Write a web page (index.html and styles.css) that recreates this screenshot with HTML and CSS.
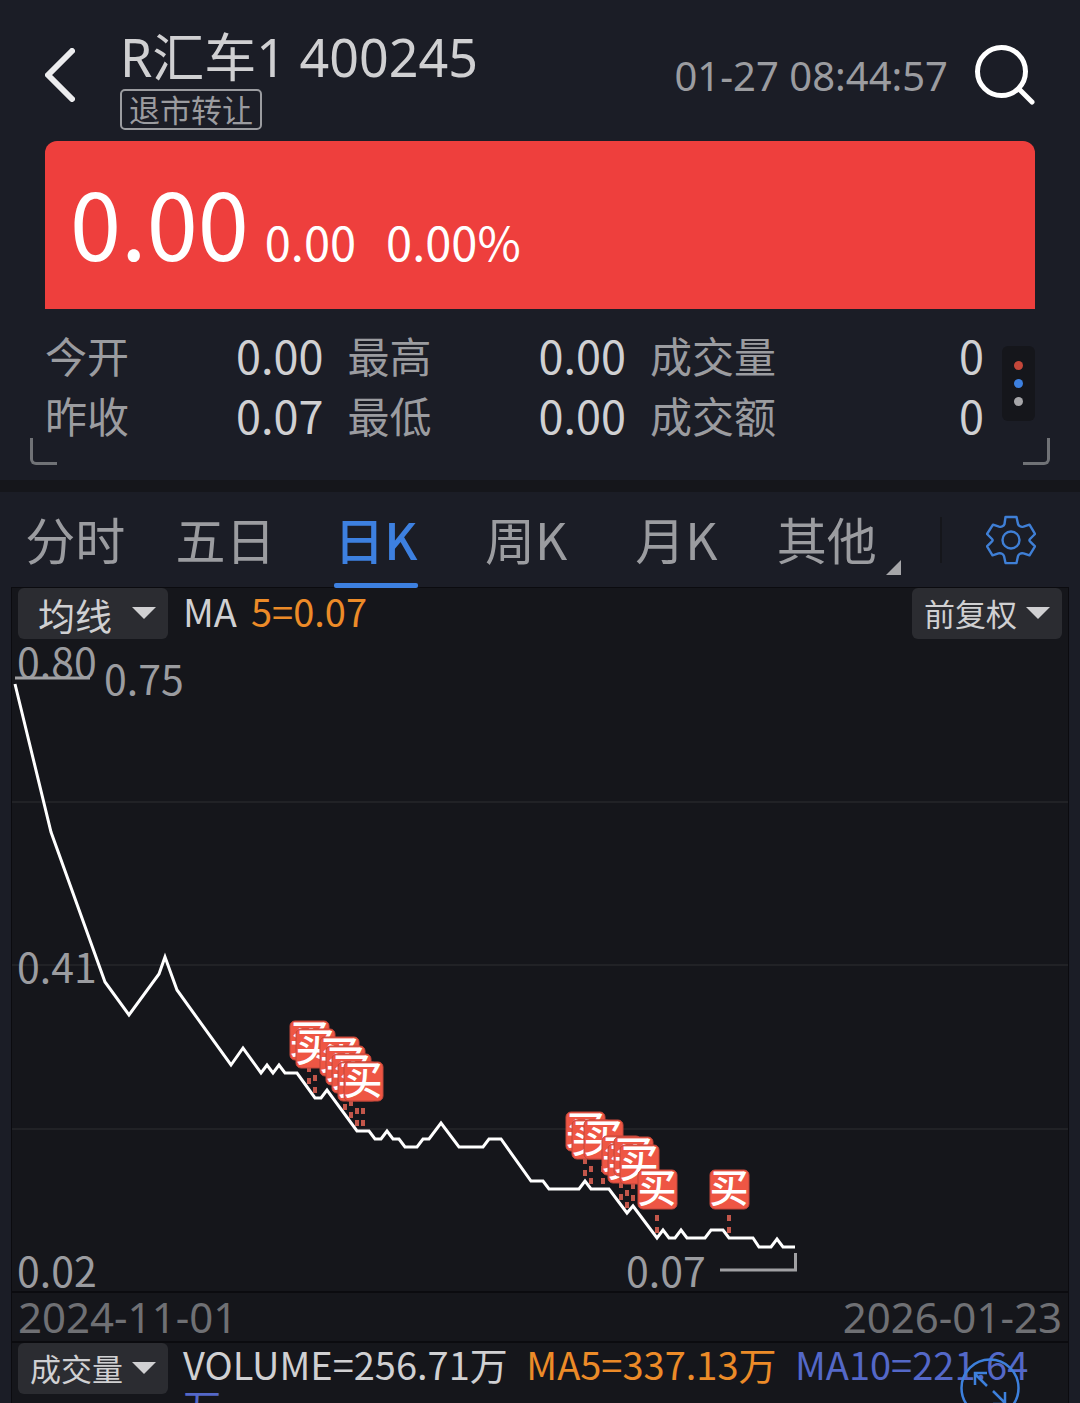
FILE: index.html
```html
<!DOCTYPE html>
<html lang="zh-CN">
<head>
    <meta charset="UTF-8">
    <meta name="viewport" content="width=device-width, initial-scale=1.0">
    <title>R汇车1 400245</title>
    <link rel="stylesheet" href="styles.css">
</head>
<body>
    <header class="header">
        <button class="icon-button" aria-label="返回">
            <svg width="30" height="54" viewBox="0 0 30 54" fill="none" stroke="#ececee" stroke-width="6" stroke-linecap="round" stroke-linejoin="round">
                <path d="M27 3 3 27l24 24"/>
            </svg>
        </button>
        <div class="stock">
            <h1>R汇车1 400245</h1>
            <span class="tag">退市转让</span>
        </div>
        <time class="time">01-27 08:44:57</time>
        <button class="icon-button" aria-label="搜索">
            <svg width="60" height="60" viewBox="0 0 60 60" fill="none" stroke="#ffffff" stroke-width="5" stroke-linecap="round">
                <circle cx="26.5" cy="26.5" r="24"/>
                <path d="M44 44l13 13"/>
            </svg>
        </button>
    </header>

    <section class="quote">
        <span class="price">0.00</span>
        <span class="change">0.00</span>
        <span class="percent">0.00%</span>
    </section>

    <section class="stats">
        <dl class="stats-grid">
            <div class="stat"><dt>今开</dt><dd>0.00</dd></div>
            <div class="stat"><dt>最高</dt><dd>0.00</dd></div>
            <div class="stat"><dt>成交量</dt><dd>0</dd></div>
            <div class="stat"><dt>昨收</dt><dd>0.07</dd></div>
            <div class="stat"><dt>最低</dt><dd>0.00</dd></div>
            <div class="stat"><dt>成交额</dt><dd>0</dd></div>
        </dl>
        <button class="more" aria-label="更多">
            <span class="dot red"></span>
            <span class="dot blue"></span>
            <span class="dot grey"></span>
        </button>
    </section>

    <nav class="tabs">
        <button class="tab">分时</button>
        <button class="tab">五日</button>
        <button class="tab active">日K</button>
        <button class="tab">周K</button>
        <button class="tab">月K</button>
        <button class="tab other">其他</button>
        <button class="settings" aria-label="设置">
            <svg width="50" height="50" viewBox="0 0 50 50" fill="none" stroke="#3f7fd6" stroke-width="2.4" stroke-linejoin="round">
                <path d="M19.500 2h11l1.500 7q.5 1.500 2 2.300 1.500.9 3.500.4l6-2 5.500 9.300-5 5q-1.200 1.200 0 2.400l5 5-5.500 9-6-2q-2-.5-3.500.4-1.500.8-2 2.300l-1.500 7h-11l-1.500-7q-.5-1.500-2-2.300-1.500-.9-3.500-.4l-6 2-5.500-9 5-5q1.200-1.200 0-2.400l-5-5L7 9.700l6 2q2 .5 3.500-.4 1.500-.8 2-2.300z"/>
                <circle cx="25" cy="25" r="8.500"/>
            </svg>
        </button>
    </nav>

    <main class="panel">
        <div class="toolbar">
            <label class="picker wide">
                <select aria-label="指标"><option>均线</option><option>BOLL</option></select>
            </label>
            <p class="legend">MA<span class="orange first">5=0.07</span></p>
            <label class="picker right">
                <select aria-label="复权"><option>前复权</option><option>后复权</option></select>
            </label>
        </div>

        <svg class="chart" viewBox="12 639 1056 652">
            <defs>
                <g id="buy">
                    <rect x="-19" y="-69" width="39" height="39" rx="5"/>
                    <text y="-37" text-anchor="middle">买</text>
                </g>
            </defs>

            <path class="grid" d="M12 802h1056M12 965h1056M12 1129h1056"/>

            <text class="axis" x="17" y="678">0.80</text>
            <text class="axis" x="17" y="983">0.41</text>
            <text class="axis" x="17" y="1287">0.02</text>
            <text class="axis" x="104" y="695">0.75</text>
            <text class="axis" x="626" y="1287">0.07</text>
            <path class="pointer" d="M15 678h75M720 1270h75.5v-17"/>

            <polyline class="line" points="15,684 51,832 105,982 129,1015 159,974 165,957 177,990 231,1065 243,1048 261,1073 267,1065 273,1073 279,1065 285,1073 297,1073 315,1098 321,1098 327,1090 357,1131 369,1131 375,1139 381,1139 387,1131 393,1139 399,1139 405,1147 417,1147 423,1139 429,1139 441,1123 459,1147 483,1147 489,1139 501,1139 531,1181 543,1181 549,1189 579,1189 585,1181 591,1189 609,1189 627,1213 633,1206 657,1238 663,1230 669,1238 675,1238 681,1230 687,1238 705,1238 711,1230 723,1230 729,1238 753,1238 759,1247 771,1247 777,1239 783,1247 795,1247"/>

            <!-- dashed stems from the buy marks down to the line -->
            <path class="stems" d="M309 1066v18M315 1075v18M345 1092v18M351 1100v18M357 1108v18M363 1108v18M585 1158v18M591 1166v18M603 1166v18M621 1182v18M627 1190v18M633 1183v18M657 1215v18M729 1215v18"/>

            <g class="marks">
                <use href="#buy" x="309" y="1090"/>
                <use href="#buy" x="315" y="1098"/>
                <use href="#buy" x="339" y="1106"/>
                <use href="#buy" x="345" y="1115"/>
                <use href="#buy" x="351" y="1123"/>
                <use href="#buy" x="357" y="1131"/>
                <use href="#buy" x="363" y="1131"/>
                <use href="#buy" x="585" y="1181"/>
                <use href="#buy" x="591" y="1189"/>
                <use href="#buy" x="603" y="1189"/>
                <use href="#buy" x="621" y="1205"/>
                <use href="#buy" x="627" y="1213"/>
                <use href="#buy" x="633" y="1206"/>
                <use href="#buy" x="639" y="1214"/>
                <use href="#buy" x="657" y="1239"/>
                <use href="#buy" x="729" y="1239"/>
            </g>
        </svg>

        <div class="dates">
            <time>2024-11-01</time>
            <time>2026-01-23</time>
        </div>

        <div class="toolbar volume">
            <label class="picker">
                <select aria-label="副图指标"><option>成交量</option><option>MACD</option></select>
            </label>
            <p class="legend">VOLUME=256.71万 <span class="orange">MA5=337.13万</span> <span class="blue-text">MA10=221.64万</span></p>
            <button class="expand" aria-label="全屏">
                <svg width="60" height="60" viewBox="0 0 60 60" fill="none" stroke="#3d80dc" stroke-width="2.5">
                    <circle cx="30" cy="30" r="28.5"/>
                    <path d="M27 28 15 16M15 27V15h12M33 33l12 12M45 34v12H33"/>
                </svg>
            </button>
        </div>
    </main>
</body>
</html>
```

FILE: styles.css
```css
* {
    box-sizing: border-box;
}
body {
    display: flex;
    flex-direction: column;
    height: 100vh;
    margin: 0;
    overflow: hidden;
    background: #1b1d26;
    color: #d0d0d2;
    font-family: "Noto Sans CJK SC", sans-serif;
}
h1, p, dl, dd {
    margin: 0;
}
button, select {
    padding: 0;
    border: none;
    background: none;
    color: inherit;
    font-family: inherit;
    cursor: pointer;
}
svg {
    display: block;
}
.header, .quote, .stats, .tabs {
    flex-shrink: 0;
}

/* header */
.header {
    display: flex;
    align-items: center;
    padding: 20px 45px 11px;
}
.icon-button {
    flex: none;
}
.stock {
    flex: 1;
    margin-left: 45px;
    padding-top: 7px;
}
h1 {
    height: 62px;
    font-family: "Noto Sans", "Noto Sans CJK SC", sans-serif;
    font-size: 52px;
    font-weight: normal;
    line-height: 60px;
}
.tag {
    display: block;
    width: fit-content;
    padding: 0 7px 1px;
    border: 2px solid #9b9ca0;
    border-radius: 5px;
    color: #9b9ca0;
    font-size: 31px;
    line-height: 36px;
}
.time {
    margin-right: 27px;
    color: #9b9ca0;
    font-family: "Noto Sans", sans-serif;
    font-size: 40px;
}

/* price */
.quote {
    display: flex;
    align-items: baseline;
    margin: 0 45px;
    padding: 18px 25px 26px;
    border-radius: 12px 12px 0 0;
    background: #ee3f3d;
    color: #ffffff;
    font-size: 47px;
    white-space: nowrap;
}
.price {
    font-size: 92px;
    line-height: 124px;
}
.change {
    margin: 0 30px 0 16px;
}

/* open, high, low */
.stats {
    position: relative;
    display: flex;
    align-items: flex-start;
    gap: 18px;
    padding: 16px 45px 35px;
}
.stats::before,
.stats::after {
    content: "";
    position: absolute;
    bottom: 15px;
    width: 24px;
    height: 24px;
    border-bottom: 3px solid #707276;
}
.stats::before {
    left: 30px;
    border-left: 3px solid #707276;
    border-bottom-left-radius: 6px;
}
.stats::after {
    right: 30px;
    border-right: 3px solid #707276;
    border-bottom-right-radius: 6px;
}
.stats-grid {
    flex: 1;
    display: grid;
    grid-template-columns: 5fr 5fr 6fr;
    column-gap: 24px;
}
.stat {
    display: flex;
    align-items: center;
    justify-content: space-between;
    height: 60px;
    line-height: 60px;
    white-space: nowrap;
}
.stat dt {
    color: #9b9ca0;
    font-size: 42px;
}
.stat dd {
    font-size: 45px;
}
.more {
    display: flex;
    flex-direction: column;
    align-items: center;
    justify-content: center;
    gap: 9px;
    width: 33px;
    height: 75px;
    margin-top: 21px;
    border-radius: 6px;
    background: #15161b;
}
.dot {
    width: 9px;
    height: 9px;
    border-radius: 50%;
}
.red {
    background: #c4473a;
}
.blue {
    background: #3d80e0;
}
.grey {
    background: #a6a6a9;
}

/* period tabs */
.tabs {
    display: flex;
    height: 108px;
    border-top: 12px solid #15161b;
}
.tab {
    position: relative;
    flex: 1;
    padding-bottom: 4px;
    color: #9b9ca0;
    font-size: 50px;
    line-height: 92px;
}
.active {
    color: #3d80e0;
    font-weight: 500;
}
.active::after {
    content: "";
    position: absolute;
    bottom: 0;
    left: calc(50% - 42px);
    width: 84px;
    height: 5px;
    border-radius: 2px;
    background: #3d80e0;
}
.other::after {
    content: "";
    position: absolute;
    right: 1px;
    bottom: 13px;
    border-bottom: 15px solid #a6a6a9;
    border-left: 15px solid transparent;
}
.settings {
    display: flex;
    align-items: center;
    justify-content: flex-end;
    width: 140px;
    height: 46px;
    margin: 25px 0 0 38px;
    padding-right: 44px;
    border-left: 2px solid #15161b;
}

/* chart panel */
.panel {
    flex: 1;
    display: flex;
    flex-direction: column;
    margin: 0 12px;
    background: #15161b;
    box-shadow: 0 0 0 1px #0b0b0f;
}
.toolbar {
    position: relative;
    display: flex;
    align-items: flex-start;
    gap: 15px;
    height: 51px;
    padding: 0 6px;
}
.picker {
    position: relative;
    flex: none;
    width: 150px;
    height: 51px;
    border-radius: 6px;
    background: #2b2c31;
}
.picker select {
    width: 100%;
    height: 100%;
    padding: 0 0 3px 12px;
    appearance: none;
    font-size: 31px;
}
.picker.wide select {
    padding: 0 0 5px 20px;
    font-size: 37px;
}
.picker::after {
    content: "";
    position: absolute;
    top: 19px;
    right: 12px;
    border: 12px solid transparent;
    border-top-color: #d0d0d2;
    border-bottom: none;
    pointer-events: none;
}
.right {
    margin-left: auto;
}
.legend {
    font-size: 38px;
    line-height: 46px;
}
.legend span {
    margin-left: 10px;
}
.legend .first {
    margin-left: 14px;
}
.orange {
    color: #ec8b28;
}
.blue-text {
    color: #5468c8;
}
.chart {
    flex: none;
    width: 100%;
    overflow: visible;
}
.chart text {
    font-size: 41px;
}
.grid {
    stroke: #212226;
    stroke-width: 2;
}
.axis {
    fill: #9b9ca0;
}
.pointer {
    fill: none;
    stroke: #a0a0a3;
    stroke-width: 3;
}
.line {
    fill: none;
    stroke: #ffffff;
    stroke-width: 3;
}
.stems {
    fill: none;
    stroke: #c2564a;
    stroke-width: 4;
    stroke-dasharray: 6 6;
}
.marks {
    fill: #ee5644;
    stroke: #c2463a;
    stroke-width: 1;
}
#buy text {
    fill: #ffffff;
    stroke: none;
    font-size: 39px;
    font-weight: 500;
}
.dates {
    display: flex;
    align-items: center;
    justify-content: space-between;
    height: 52px;
    padding: 0 6px;
    border: solid #0b0b0f;
    border-width: 2px 0;
    color: #6f7074;
    font-family: "Noto Sans", sans-serif;
    font-size: 42px;
    line-height: 48px;
}
.volume {
    flex: 1;
}
.volume .legend {
    flex: 1;
    line-height: 42px;
}
.expand {
    position: absolute;
    top: 15px;
    right: 48px;
}
```
